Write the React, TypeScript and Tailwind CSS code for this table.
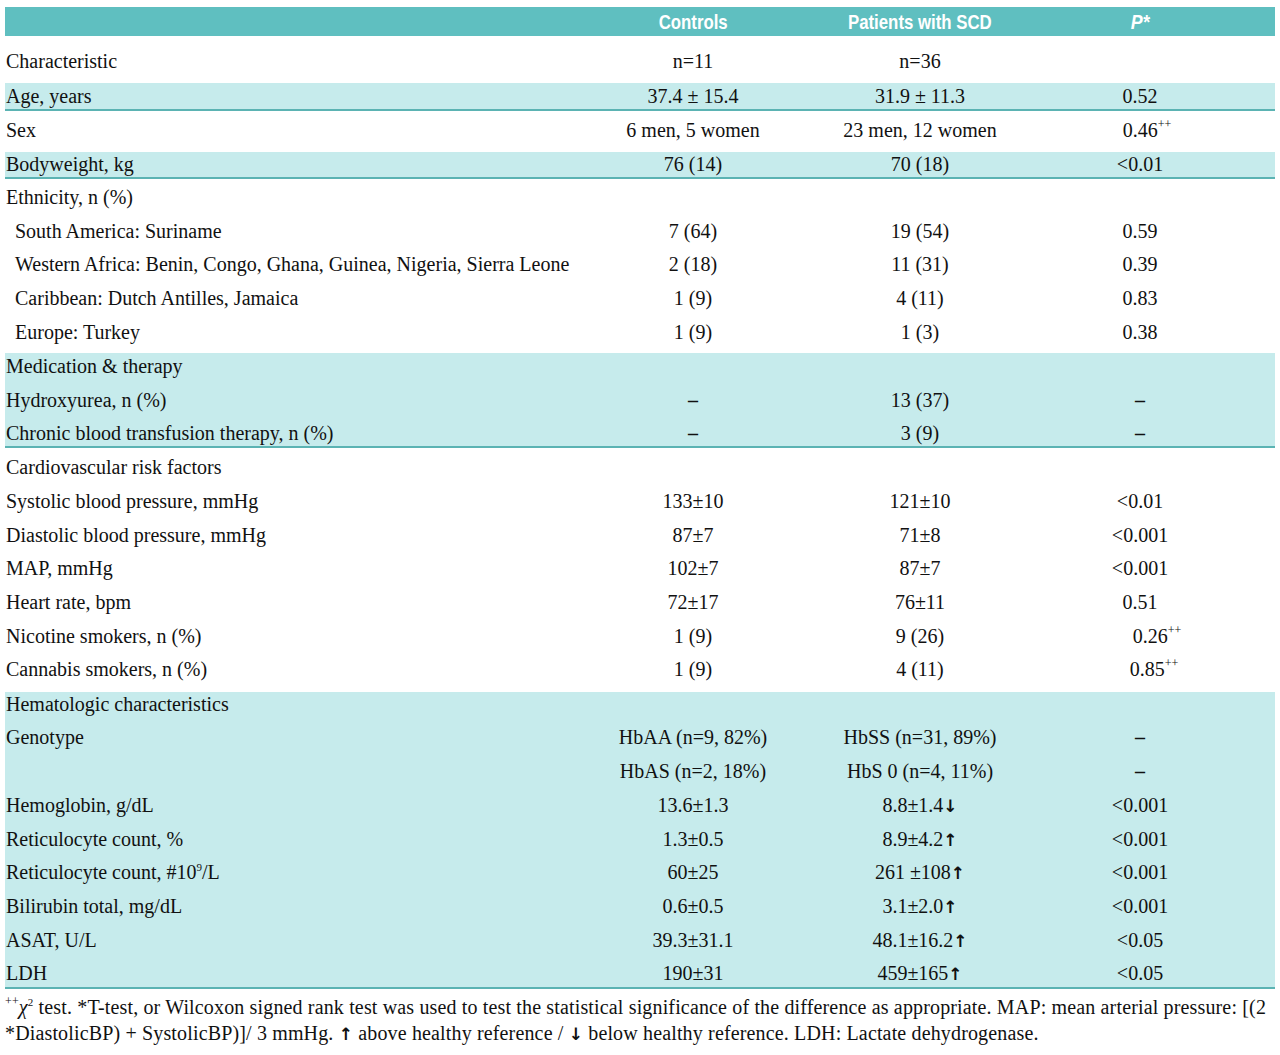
import React from 'react';

type Row = {
  label: React.ReactNode;
  c?: React.ReactNode;
  s?: React.ReactNode;
  p?: React.ReactNode;
  cls: string;
  band?: boolean;
  border?: boolean;
  indent?: boolean;
};

const Up = () => <span className="font-['DejaVu_Sans',sans-serif] text-[17px] font-bold">↑</span>;
const Down = () => <span className="font-['DejaVu_Sans',sans-serif] text-[17px] font-bold">↓</span>;
const PP = () => <sup className="text-[12px] align-[3px]">++</sup>;
const Dash = () => <span className="font-bold">–</span>;

const rows: Row[] = [
  { label: 'Characteristic', c: 'n=11', s: 'n=36', cls: 'h-[47px] pt-[13px]' },
  { label: 'Age, years', c: '37.4 ± 15.4', s: '31.9 ± 11.3', p: '0.52', cls: 'h-[28px] pt-[1px]', band: true, border: true },
  { label: 'Sex', c: '6 men, 5 women', s: '23 men, 12 women', p: <span className="pl-[14px]">0.46<PP /></span>, cls: 'h-[41px] pt-[7px]' },
  { label: 'Bodyweight, kg', c: '76 (14)', s: '70 (18)', p: '<0.01', cls: 'h-[27px] pt-0', band: true, border: true },
  { label: 'Ethnicity, n (%)', cls: 'h-[35px] pt-[6px]' },
  { label: 'South America: Suriname', c: '7 (64)', s: '19 (54)', p: '0.59', cls: 'h-[34px] pt-[5px]', indent: true },
  { label: 'Western Africa: Benin, Congo, Ghana, Guinea, Nigeria, Sierra Leone', c: '2 (18)', s: '11 (31)', p: '0.39', cls: 'h-[33px] pt-[4px]', indent: true },
  { label: 'Caribbean: Dutch Antilles, Jamaica', c: '1 (9)', s: '4 (11)', p: '0.83', cls: 'h-[34px] pt-[5px]', indent: true },
  { label: 'Europe: Turkey', c: '1 (9)', s: '1 (3)', p: '0.38', cls: 'h-[38px] pt-[5px]', indent: true },
  { label: 'Medication & therapy', cls: 'h-[30px] pt-px', band: true },
  { label: 'Hydroxyurea, n (%)', c: <Dash />, s: '13 (37)', p: <Dash />, cls: 'h-[33px] pt-[5px]', band: true },
  { label: 'Chronic blood transfusion therapy, n (%)', c: <Dash />, s: '3 (9)', p: <Dash />, cls: 'h-[32px] pt-[5px]', band: true, border: true },
  { label: 'Cardiovascular risk factors', cls: 'h-[36px] pt-[7px]' },
  { label: 'Systolic blood pressure, mmHg', c: '133±10', s: '121±10', p: '<0.01', cls: 'h-[34px] pt-[5px]' },
  { label: 'Diastolic blood pressure, mmHg', c: '87±7', s: '71±8', p: '<0.001', cls: 'h-[33px] pt-[5px]' },
  { label: 'MAP, mmHg', c: '102±7', s: '87±7', p: '<0.001', cls: 'h-[34px] pt-[5px]' },
  { label: 'Heart rate, bpm', c: '72±17', s: '76±11', p: '0.51', cls: 'h-[34px] pt-[5px]' },
  { label: 'Nicotine smokers, n (%)', c: '1 (9)', s: '9 (26)', p: <span className="pl-[34px]">0.26<PP /></span>, cls: 'h-[33px] pt-[5px]' },
  { label: 'Cannabis smokers, n (%)', c: '1 (9)', s: '4 (11)', p: <span className="pl-[28px]">0.85<PP /></span>, cls: 'h-[40px] pt-[5px]' },
  { label: 'Hematologic characteristics', cls: 'h-[28px] pt-0', band: true },
  { label: 'Genotype', c: 'HbAA (n=9, 82%)', s: 'HbSS (n=31, 89%)', p: <Dash />, cls: 'h-[34px] pt-[5px]', band: true },
  { label: '', c: 'HbAS (n=2, 18%)', s: 'HbS 0 (n=4, 11%)', p: <Dash />, cls: 'h-[34px] pt-[5px]', band: true },
  { label: 'Hemoglobin, g/dL', c: '13.6±1.3', s: <>8.8±1.4<Down /></>, p: '<0.001', cls: 'h-[34px] pt-[5px]', band: true },
  { label: 'Reticulocyte count, %', c: '1.3±0.5', s: <>8.9±4.2<Up /></>, p: '<0.001', cls: 'h-[33px] pt-[5px]', band: true },
  { label: <>Reticulocyte count, #10<sup className="text-[11px] align-[3px]">9</sup>/L</>, c: '60±25', s: <>261 ±108<Up /></>, p: '<0.001', cls: 'h-[34px] pt-[5px]', band: true },
  { label: 'Bilirubin total, mg/dL', c: '0.6±0.5', s: <>3.1±2.0<Up /></>, p: '<0.001', cls: 'h-[34px] pt-[5px]', band: true },
  { label: 'ASAT, U/L', c: '39.3±31.1', s: <>48.1±16.2<Up /></>, p: '<0.05', cls: 'h-[34px] pt-[5px]', band: true },
  { label: 'LDH', c: '190±31', s: <>459±165<Up /></>, p: '<0.05', cls: 'h-[32px] pt-[4px]', band: true, border: true },
];

export default function App() {
  return (
    <div className="w-[1280px] h-[1055px] overflow-hidden bg-white pt-[7px] font-['Liberation_Serif',serif] text-[20px] leading-[24px] text-[#111]">
      <div className="ml-[5px] w-[1270px]">
        {/* header band */}
        <div className="grid grid-cols-[575px_226px_228px_212px_1fr] h-[29px] items-center bg-[#5fbfc0] text-white font-bold font-['Liberation_Sans',sans-serif] text-[21px] leading-[29px]">
          <div />
          <div className="text-center"><span className="inline-block scale-x-[0.8]">Controls</span></div>
          <div className="text-center"><span className="inline-block scale-x-[0.8]">Patients with SCD</span></div>
          <div className="text-center italic"><span className="inline-block scale-x-[0.85]">P*</span></div>
          <div />
        </div>
        {rows.map((r, i) => (
          <div
            key={i}
            className={`grid grid-cols-[575px_226px_228px_212px_1fr] items-start box-border ${r.cls} ${r.band ? 'bg-[#c6ebec]' : ''} ${r.border ? 'border-b-2 border-[#5bb3b3]' : ''}`}
          >
            <div className={`whitespace-nowrap ${r.indent ? 'pl-[10px]' : 'pl-px'}`}>{r.label}</div>
            <div className="text-center whitespace-nowrap">{r.c}</div>
            <div className="text-center whitespace-nowrap">{r.s}</div>
            <div className="text-center whitespace-nowrap">{r.p}</div>
            <div />
          </div>
        ))}
      </div>
      <div className="pl-[5px] pt-[5px] leading-[26px] text-[20px] whitespace-nowrap overflow-hidden w-[1280px] tracking-[0.15px]">
        <div>
          <sup className="text-[12px] align-[3px]">++</sup>
          <span className="italic">χ</span>
          <sup className="text-[11px] align-[3px]">2</sup> test. *T-test, or Wilcoxon signed rank test was used to test the statistical significance of the difference as appropriate. MAP: mean arterial pressure: [(2
        </div>
        <div>
          *DiastolicBP) + SystolicBP)]/ 3 mmHg. <Up /> above healthy reference / <Down /> below healthy reference. LDH: Lactate dehydrogenase.
        </div>
      </div>
    </div>
  );
}
